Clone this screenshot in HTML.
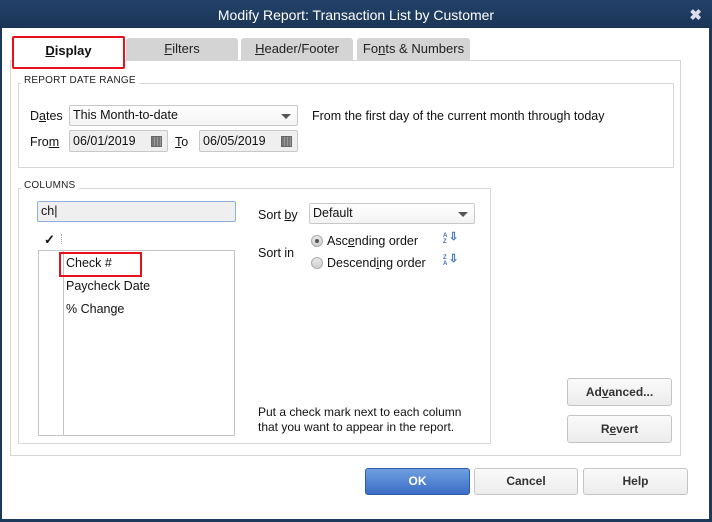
<!DOCTYPE html>
<html><head><meta charset="utf-8"><style>
*{box-sizing:border-box;margin:0;padding:0}
body{width:712px;height:522px;background:#1d3a5c;font-family:"Liberation Sans",Arial,sans-serif;font-size:12px;color:#111;position:relative;overflow:hidden}
.a{position:absolute}
.title{left:0;top:0;width:712px;height:28px;background:linear-gradient(#23426a,#1b3656);color:#fff;font-size:14px;text-align:center;line-height:30px}
.close{right:10px;top:6px;color:#dde;font-size:15px;font-weight:bold}
.win{left:2px;top:28px;width:707px;height:491px;background:#fff}
.tab{height:22px;top:38px;background:#d4d4d4;border-radius:3px 3px 0 0;text-align:center;line-height:22px;font-size:13px;color:#222}
.panel{left:10px;top:60px;width:671px;height:396px;border:1px solid #d6d6d6}
.grp{border:1px solid #d8d8d8}
.lbl{font-size:10px;color:#222;background:#fff;padding:0 3px;letter-spacing:0.2px}
.sel{border:1px solid #c8c8c8;border-radius:2px;background:linear-gradient(#fff,#f3f3f3);height:21px;line-height:19px;padding-left:3px;font-size:12.5px}
.arr{position:absolute;right:6px;top:8px;width:0;height:0;border-left:5px solid transparent;border-right:5px solid transparent;border-top:5px solid #555}
.date{border:1px solid #c8c8c8;border-radius:2px;background:#efefef;height:22px;line-height:20px;padding-left:3px;font-size:12.5px}
.cal{position:absolute;right:5px;top:5px;width:11px;height:11px;background:repeating-linear-gradient(90deg,#777 0 2px,#999 2px 3px);border:1px solid #666}
.btn{border:1px solid #c4c4c4;border-radius:3px;background:linear-gradient(#fafafa,#ececec);text-align:center;font-weight:bold;color:#333;font-size:12px}
u{text-decoration:underline}
.radio{width:12px;height:12px;border-radius:50%;border:1px solid #aaa;background:linear-gradient(#e8e8e8,#cfcfcf)}
.az{font-size:6px;line-height:6px;color:#3a6fb5;font-weight:bold}
</style></head><body>
<div class="a title">Modify Report: Transaction List by Customer</div>
<div class="a close">✖</div>
<div class="a win"></div>
<div class="a panel"></div>
<div class="a tab" style="left:126px;width:112px"><u>F</u>ilters</div>
<div class="a tab" style="left:241px;width:112px"><u>H</u>eader/Footer</div>
<div class="a tab" style="left:357px;width:113px">Fo<u>n</u>ts &amp; Numbers</div>
<div class="a" style="left:12px;top:36px;width:113px;height:33px;background:#fff;border:2px solid #e8101a;border-radius:2px;text-align:center;line-height:25px;font-weight:bold;font-size:13px"><u>D</u>isplay</div>

<div class="a grp" style="left:18px;top:83px;width:656px;height:85px"></div>
<div class="a lbl" style="left:21px;top:75px">REPORT DATE RANGE</div>
<div class="a" style="left:30px;top:109px;font-size:12.5px">D<u>a</u>tes</div>
<div class="a sel" style="left:69px;top:105px;width:229px">This Month-to-date<div class="arr"></div></div>
<div class="a" style="left:312px;top:109px;font-size:12.5px">From the first day of the current month through today</div>
<div class="a" style="left:30px;top:135px;font-size:12.5px">Fro<u>m</u></div>
<div class="a date" style="left:69px;top:130px;width:99px">06/01/2019<div class="cal"></div></div>
<div class="a" style="left:175px;top:135px;font-size:12.5px"><u>T</u>o</div>
<div class="a date" style="left:199px;top:130px;width:99px">06/05/2019<div class="cal"></div></div>

<div class="a grp" style="left:18px;top:188px;width:473px;height:256px"></div>
<div class="a lbl" style="left:21px;top:180px">COLUMNS</div>
<div class="a" style="left:37px;top:201px;width:199px;height:21px;background:#efefef;border:1px solid #8fb0dc;border-radius:2px;padding-left:3px;line-height:19px;font-size:12.5px">ch|</div>
<div class="a" style="left:44px;top:232px;font-size:13px;font-weight:bold">✓</div>
<div class="a" style="left:61px;top:234px;width:1px;height:10px;border-left:1px dotted #aaa"></div>
<div class="a" style="left:38px;top:250px;width:197px;height:186px;border:1px solid #c4c4c4"></div>
<div class="a" style="left:63px;top:251px;width:1px;height:184px;background:#c4c4c4"></div>
<div class="a" style="left:59px;top:252px;width:83px;height:25px;border:2px solid #e8101a"></div>
<div class="a" style="left:66px;top:256px;font-size:12.5px">Check #</div>
<div class="a" style="left:66px;top:279px;font-size:12.5px">Paycheck Date</div>
<div class="a" style="left:66px;top:302px;font-size:12.5px">% Change</div>

<div class="a" style="left:258px;top:208px;font-size:12.5px">Sort <u>b</u>y</div>
<div class="a sel" style="left:309px;top:203px;width:166px">Default<div class="arr"></div></div>
<div class="a" style="left:258px;top:246px;font-size:12.5px">Sort in</div>
<div class="a radio" style="left:311px;top:235px"><div style="width:4px;height:4px;background:#555;border-radius:50%;margin:3px"></div></div>
<div class="a" style="left:327px;top:234px;font-size:12.5px">Asc<u>e</u>nding order</div>
<div class="a radio" style="left:311px;top:257px"></div>
<div class="a" style="left:327px;top:256px;font-size:12.5px">Descend<u>i</u>ng order</div>
<div class="a az" style="left:443px;top:233px">A<br>Z</div>
<div class="a" style="left:449px;top:230px;font-size:11px;color:#3a6fb5;font-weight:bold">⇩</div>
<div class="a az" style="left:443px;top:255px">Z<br>A</div>
<div class="a" style="left:449px;top:252px;font-size:11px;color:#3a6fb5;font-weight:bold">⇩</div>
<div class="a" style="left:258px;top:405px;font-size:12px;line-height:15px">Put a check mark next to each column<br>that you want to appear in the report.</div>

<div class="a btn" style="left:567px;top:378px;width:105px;height:28px;line-height:26px">Ad<u>v</u>anced...</div>
<div class="a btn" style="left:567px;top:415px;width:105px;height:28px;line-height:26px">R<u>e</u>vert</div>

<div class="a btn" style="left:365px;top:468px;width:105px;height:27px;line-height:25px;background:linear-gradient(#6e9ee0,#3c6ec6);border-color:#2f5aa8;color:#fff">OK</div>
<div class="a btn" style="left:474px;top:468px;width:104px;height:27px;line-height:25px">Cancel</div>
<div class="a btn" style="left:583px;top:468px;width:105px;height:27px;line-height:25px">Help</div>
</body></html>
